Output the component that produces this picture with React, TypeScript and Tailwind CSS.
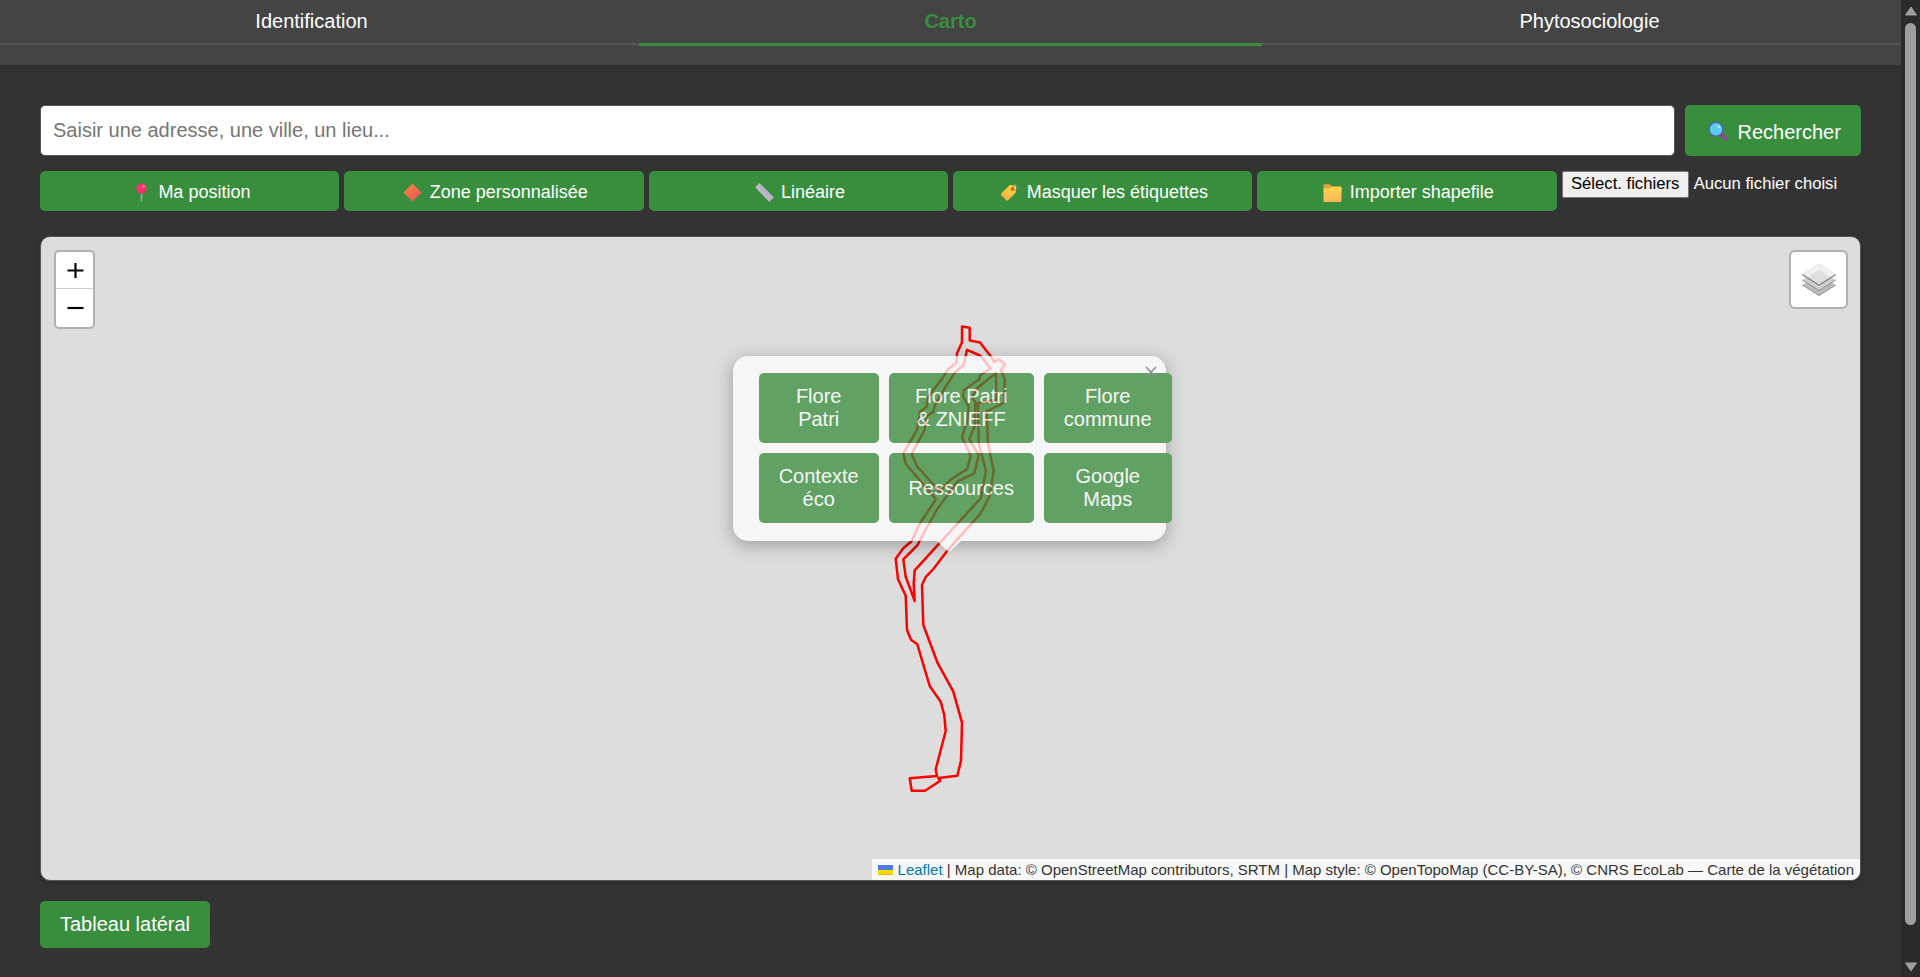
import type { ReactNode } from 'react';

const font = "font-['Liberation_Sans',Arial,sans-serif]";

const PinIcon = () => (
  <svg className="h-[19px] w-[25px]" viewBox="0 0 25 19">
    <rect x="11.8" y="8" width="1.5" height="10.5" rx=".7" fill="#a9a3b0" />
    <ellipse cx="12.5" cy="5.5" rx="5.1" ry="5.3" fill="#f8316d" />
    <circle cx="14.6" cy="3.4" r="1.1" fill="#ff9fc0" />
  </svg>
);

const DiamondIcon = () => (
  <svg className="h-[19px] w-[25px]" viewBox="0 0 25 19">
    <defs>
      <linearGradient id="diamond" x1="0" y1="0" x2="1" y2="1">
        <stop offset="0" stopColor="#f98a3c" />
        <stop offset="1" stopColor="#ea4f5c" />
      </linearGradient>
    </defs>
    <path d="M12.5 1 21 9.5 12.5 18 4 9.5z" fill="url(#diamond)" stroke="url(#diamond)" strokeLinejoin="round" />
  </svg>
);

const RulerIcon = () => (
  <svg className="h-[19px] w-[25px]" viewBox="0 0 25 19">
    <path d="M7.4 .9 4 4.4 17.3 18 21.1 14.4z" fill="#bdb7c9" stroke="#bdb7c9" strokeWidth="1.2" strokeLinejoin="round" />
    <path d="M8.9 3.2 7.9 4.2M11.200 5.6l-1 1M13.500 7.9l-1 1M15.800 10.2l-1 1M18.100 12.500l-1 1" stroke="#9a86bb" strokeWidth=".8" />
  </svg>
);

const TagIcon = () => (
  <svg className="h-[19px] w-[25px]" viewBox="0 0 25 19">
    <defs>
      <linearGradient id="tag" x1="1" y1="0" x2="0" y2="1">
        <stop offset="0" stopColor="#ffd83f" />
        <stop offset="1" stopColor="#fba746" />
      </linearGradient>
    </defs>
    <path d="M12 2.700q.6-.7 1.600-.7l4.500.6q1 .2 1 1.200l-.3 5q0 .8-.7 1.500l-6.900 6.900q-1 .9-2 0l-4.800-4.900q-1-1 0-2z" fill="url(#tag)" />
    <circle cx="15.600" cy="6" r="2" fill="#d8672c" />
    <path d="M15.800 5.600C15.300 2.500 17.600 .8 19.400 2c1.900 1.300.8 4.500-.8 5.400" fill="none" stroke="#7c8a78" strokeWidth="1" />
  </svg>
);

const FolderIcon = () => (
  <svg className="h-[19px] w-[25px]" viewBox="0 0 25 19">
    <defs>
      <linearGradient id="folder" x1="0" y1="0" x2="0" y2="1">
        <stop offset="0" stopColor="#ffd84a" />
        <stop offset="1" stopColor="#fdb45c" />
      </linearGradient>
    </defs>
    <path d="M3.500 2.500q0-1.200 1.200-1.200h5l2 2h8.600q1.200 0 1.200 1.200v5h-18z" fill="#e9a23b" />
    <path d="M3.500 6.500q0-.9.900-.9h5.200l2-1.600h9q.9 0 .9.900v13q0 1-.9 1H4.400q-.9 0-.9-1z" fill="url(#folder)" />
  </svg>
);

const SearchIcon = () => (
  <svg className="h-[21px] w-[27px]" viewBox="0 0 27 21">
    <path d="m17 14 4.300 4" stroke="#8a4b96" strokeWidth="3.800" strokeLinecap="round" />
    <path d="m15 12.200 2 2" stroke="#554a75" strokeWidth="2" />
    <circle cx="11" cy="8.300" r="6.900" fill="#5ccdf0" stroke="#5360a8" strokeWidth="1.300" />
    <circle cx="14" cy="5.700" r="1.300" fill="#b5ebfb" />
  </svg>
);

const LayersIcon = () => (
  <svg className="h-[34px] w-[34px]" viewBox="0 0 34 34">
    <defs>
      <linearGradient id="sheet" x1="0" y1="0" x2="0" y2="1">
        <stop offset="0" stopColor="#e2e2e2" />
        <stop offset="1" stopColor="#d9d9d9" />
      </linearGradient>
    </defs>
    <path d="M.3 22 17 12l16.700 10L17 33z" fill="#bcbcbc" />
    <path d="M.3 22 17 32.500 33.700 22" fill="none" stroke="#929292" strokeWidth="1" />
    <path d="M.3 17 17 7l16.700 10L17 28z" fill="#cfcfcf" />
    <path d="M.3 17 17 27.500 33.700 17" fill="none" stroke="#8a8a8a" strokeWidth="1" />
    <path d="M.3 11.500 17 .8l16.700 10.700L17 22.500z" fill="#f1f1f1" />
    <path d="M5.500 14.500 17 6.500l11.500 8L17 22z" fill="url(#sheet)" />
    <path d="M.3 11.500 17 22.300 33.700 11.500" fill="none" stroke="#7d7d7d" strokeWidth="1.100" />
    <path d="M.5 11.300 17 .9l16.500 10.400" fill="none" stroke="#dcdcdc" strokeWidth=".6" />
  </svg>
);

const tools: { label: string; icon: ReactNode }[] = [
  { label: 'Ma position', icon: <PinIcon /> },
  { label: 'Zone personnalisée', icon: <DiamondIcon /> },
  { label: 'Linéaire', icon: <RulerIcon /> },
  { label: 'Masquer les étiquettes', icon: <TagIcon /> },
  { label: 'Importer shapefile', icon: <FolderIcon /> },
];

const popupLinks = ['Flore Patri', 'Flore Patri & ZNIEFF', 'Flore commune', 'Contexte éco', 'Ressources', 'Google Maps'];

const zonePath = [
  'M962 326.500 969.700 327.800 969.700 340.500 980 342.500 991.300 357 994.300 362 998.700 359.300 1005 364.300 1001 370 1004.700 379 1004.300 402.700 986.700 411.300 988 443.300 993.700 471 989.300 496.700 980.700 513.300 947.300 550.700 934 568.300 925.700 577 922 585 923.300 625 937.300 662.300 953.300 691.700 962 722.700 961 760.700 957.300 775.700 938.300 778 940.300 780.700 925 790.700 911.700 790.700 909.700 778.300 937 776 935.700 769.300 945.700 731 944.300 715.300 940.700 701.700 929.700 686 917.300 644.300 911 639.700 907 630 905.700 595.700 898 579.300 895.700 558.700 903.300 548.300 911.300 541.500 920 523.300 936 499.300 905.700 463.700 903.300 453.300 916.700 430.700 920 411.700 926.500 407 928.300 396.700 941.700 379.300 948 369.300 956.700 362.300 957 353.300 962 342.300z',
  'M967 349.800 980 355.500 990.700 368.300 980 375.500 979.300 379.300 964 390 962.700 396 968.700 406.700 967.500 420 962 437 970.700 455.700 967.300 468.700 950 480 940 492 917.300 466.700 911.700 454 924.300 430.700 926.700 416 933.300 411.700 935 405 946.700 385 955 372.300 963.700 365z',
  'M996 373 977 388.300 972.300 397.300 976 403.500 996.300 400z',
  'M975.300 403.500 975 425 969.300 439.300 978.700 455 974.300 473.300 957.300 481.700 936.700 510 920 540 917.700 545 903.300 559.300 905.700 576.700 914.700 601 913.700 583.300 914.700 570.300 940 542.700 980.700 498.300 986 471 978.700 443.300 978 405z',
];

function Header() {
  return (
    <header className="h-[65px] shrink-0 bg-[#444] shadow-[0_2px_6px_rgba(0,0,0,0.1)]">
      <nav className="flex h-[45px] gap-4 border-b-2 border-[#555] text-[20px] font-medium leading-[23px] text-white">
        <a className="flex-1 pt-[9.500px] text-center">Identification</a>
        <a className="-mb-[3px] flex-1 border-b-[3px] border-[#388e3c] pt-[9.500px] text-center font-bold text-[#388e3c]">Carto</a>
        <a className="flex-1 pt-[9.500px] text-center">Phytosociologie</a>
      </nav>
    </header>
  );
}

function Popup() {
  return (
    <div className="absolute left-[692px] top-[119px] h-[197px] w-[433px] opacity-[0.745]">
      <div className="h-[185px] w-full rounded-[15px] bg-white pl-[26px] pt-[17px] shadow-[0_4px_18px_rgba(0,0,0,0.4)]">
        <div className="-ml-[0.300px] grid w-[413px] grid-cols-[120px_145px_128px] grid-rows-[70px_70px] gap-[10px]">
          {popupLinks.map((label) => (
            <a key={label} className="flex items-center justify-center rounded-[5px] bg-[#388e3c] px-[19px] text-center text-[20px] leading-[23px] text-white">
              {label}
            </a>
          ))}
        </div>
      </div>
      <svg className="absolute left-[204px] top-[185px] h-3 w-6" viewBox="0 0 24 12">
        <path d="M0 0h24L12 11.500z" fill="#fff" />
      </svg>
      <svg className="absolute right-[9px] top-[10px] h-3 w-3" viewBox="0 0 12 12">
        <path d="m1 1 10 10M11 1 1 11" stroke="#757575" strokeWidth="1.600" />
      </svg>
    </div>
  );
}

function MapPanel() {
  return (
    <section className="relative mt-[25px] h-[645px] overflow-hidden rounded-[10px] border border-[#555] bg-[#ddd] shadow-[0_2px_8px_rgba(0,0,0,0.15)]">
      <svg className="absolute left-0 top-0 h-[643px] w-[1819px]" viewBox="41 237 1819 643">
        <path d={zonePath.join(' ')} fill="none" stroke="#f00" strokeWidth="2.500" strokeLinejoin="round" />
      </svg>

      <div className="absolute left-[13px] top-[13px] flex w-[41px] flex-col rounded-[5px] border-2 border-black/20 bg-white bg-clip-padding">
        <button className="flex h-[37px] items-center justify-center border-b border-[#ccc] pl-[1px] pt-[1px]">
          <svg className="h-[17px] w-[17px]" viewBox="0 0 17 17">
            <path d="M.5 8.500h16M8.500 1v15" stroke="#000" strokeWidth="2.200" />
          </svg>
        </button>
        <button className="flex h-[38px] items-center justify-center pl-[1px]">
          <svg className="h-[17px] w-[17px]" viewBox="0 0 17 17">
            <path d="M.5 8h16" stroke="#000" strokeWidth="2.200" />
          </svg>
        </button>
      </div>

      <button className="absolute right-[12px] top-[13px] flex h-[59px] w-[59px] items-center justify-center rounded-[6px] border-2 border-black/20 bg-white bg-clip-padding">
        <LayersIcon />
      </button>

      <Popup />

      <div className="absolute bottom-0 right-0 flex h-[21px] items-center whitespace-nowrap bg-white/80 px-[6px] text-[15px] leading-[21px] text-[#333]">
        <svg className="mr-[5px] h-[10px] w-[15px]" viewBox="0 0 15 10">
          <path fill="#4c7be1" d="M0 0h15v5H0z" />
          <path fill="#ffd500" d="M0 5h15v4H0z" />
          <path fill="#e0bc00" d="M0 9h15v1H0z" />
        </svg>
        <a className="text-[#0078a8]">Leaflet</a>
        <span className="whitespace-pre"> | Map data: © OpenStreetMap contributors, SRTM | Map style: © OpenTopoMap (CC-BY-SA), © CNRS EcoLab — Carte de la végétation</span>
      </div>
    </section>
  );
}

function Scrollbar() {
  return (
    <div className="flex h-full w-[19px] shrink-0 flex-col items-center bg-[#2b2b2b]">
      <svg className="mt-[6px] h-[10px] w-3" viewBox="0 0 12 10">
        <path d="M6 1 11.500 9H.5z" fill="#9f9f9f" stroke="#9f9f9f" strokeLinejoin="round" />
      </svg>
      <div className="mr-[1px] mt-[7px] h-[902px] w-[11px] rounded-full bg-[#9f9f9f]" />
      <svg className="mt-[37px] h-[10px] w-3" viewBox="0 0 12 10">
        <path d="M6 9 .5 1h11z" fill="#9f9f9f" stroke="#9f9f9f" strokeLinejoin="round" />
      </svg>
    </div>
  );
}

export default function App() {
  return (
    <div className={`flex h-[977px] w-[1920px] overflow-hidden bg-[#333] ${font}`}>
      <div className="flex min-w-0 flex-1 flex-col">
        <Header />
        <main className="flex flex-col px-10 pt-10">
          <div className="flex h-[51px] gap-[10px]">
            <input
              className="min-w-0 flex-1 rounded-[5px] border border-[#555] bg-white px-3 pb-[2px] text-[20px] placeholder:text-[#757575]"
              placeholder="Saisir une adresse, une ville, un lieu..."
            />
            <button className="flex w-[176px] items-center rounded-[5px] bg-[#388e3c] pl-5 pt-[2px] text-[20px] text-white">
              <SearchIcon />
              <span className="ml-[5.500px]">Rechercher</span>
            </button>
          </div>
          <div className="mt-[15px] flex h-10 items-start gap-[5px]">
            {tools.map(({ label, icon }) => (
              <button key={label} className="flex h-10 min-w-0 flex-1 items-center justify-center rounded-[5px] bg-[#388e3c] pt-[2px] text-[18px] text-white">
                {icon}
                <span className="ml-[4.500px] whitespace-nowrap">{label}</span>
              </button>
            ))}
            <div className="flex min-w-0 flex-1 items-center gap-[5px] whitespace-nowrap text-[16.670px] leading-[19px] text-white">
              <button className="h-[27px] w-[127px] rounded-[2px] border border-[#767676] bg-[#efefef] pb-[2px] text-black">Sélect. fichiers</button>
              <span className="pb-[2px]">Aucun fichier choisi</span>
            </div>
          </div>
          <MapPanel />
          <div className="mt-5 flex">
            <button className="h-[47px] w-[170px] rounded-[5px] bg-[#388e3c] text-[20px] leading-[23px] text-white">Tableau latéral</button>
          </div>
        </main>
      </div>
      <Scrollbar />
    </div>
  );
}
